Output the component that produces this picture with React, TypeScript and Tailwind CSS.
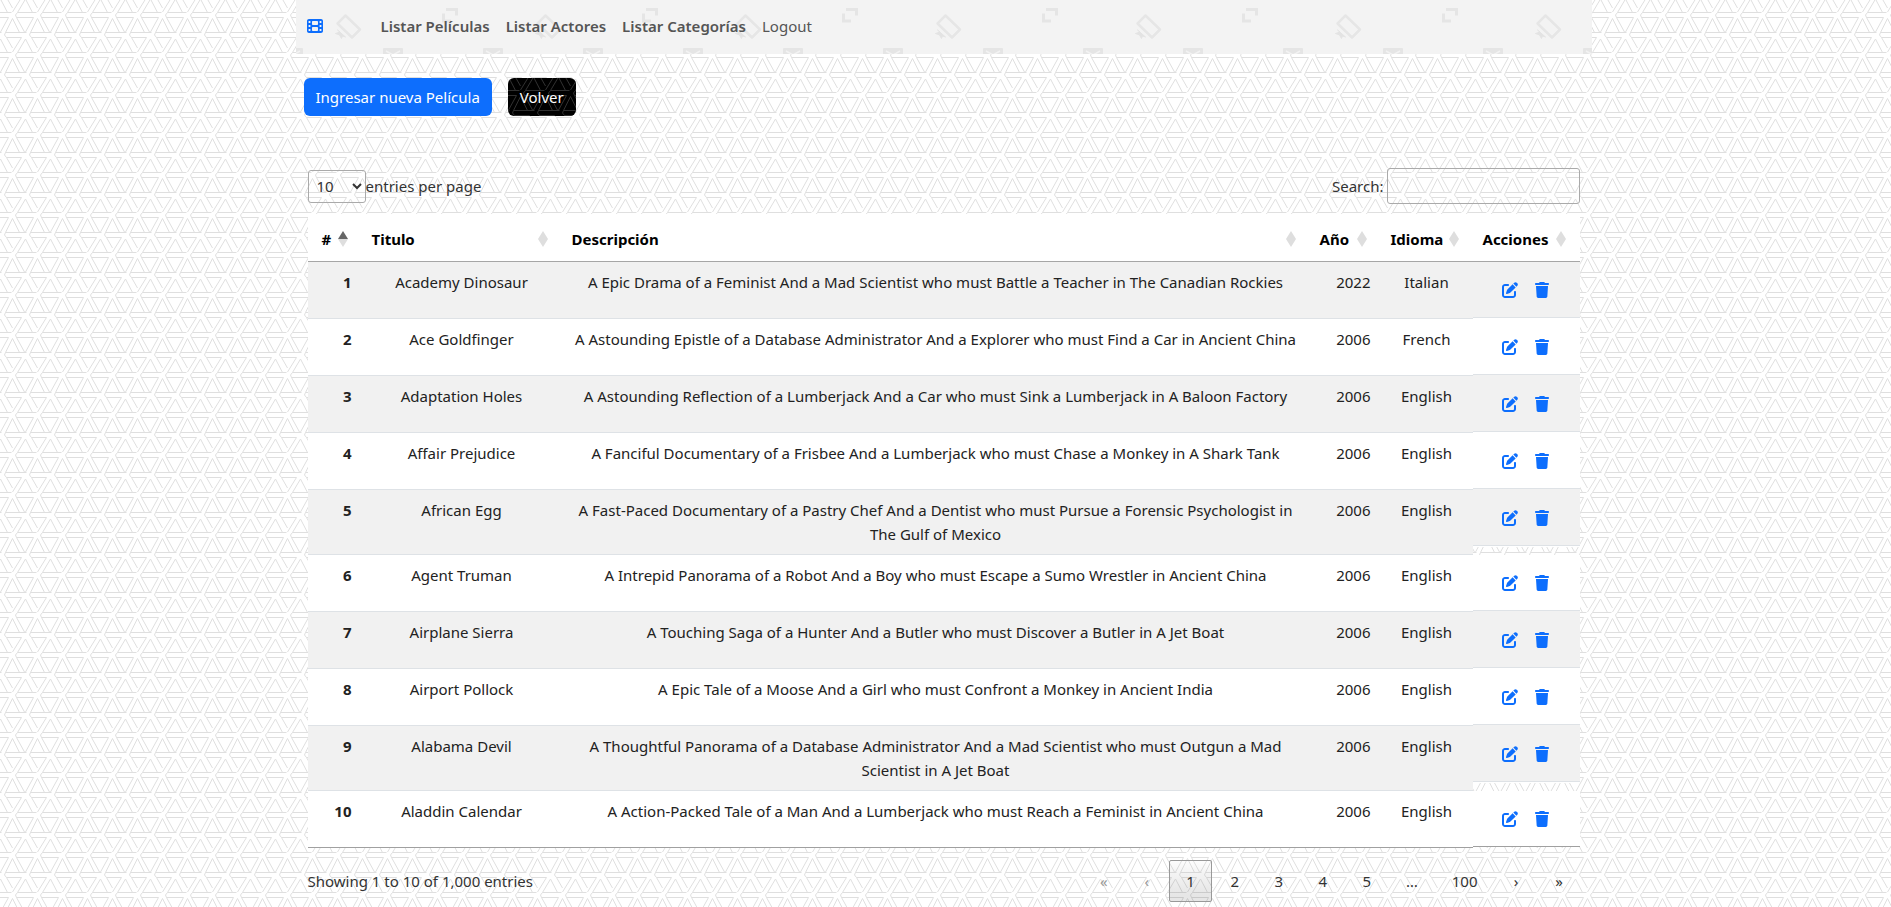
import { useState } from "react";
import { FaFilm, FaPenToSquare, FaTrash } from "react-icons/fa6";

type Film = { id: number; title: string; description: string; year: number; language: string };

const films: Film[] = [
  { id: 1, title: "Academy Dinosaur", description: "A Epic Drama of a Feminist And a Mad Scientist who must Battle a Teacher in The Canadian Rockies", year: 2022, language: "Italian" },
  { id: 2, title: "Ace Goldfinger", description: "A Astounding Epistle of a Database Administrator And a Explorer who must Find a Car in Ancient China", year: 2006, language: "French" },
  { id: 3, title: "Adaptation Holes", description: "A Astounding Reflection of a Lumberjack And a Car who must Sink a Lumberjack in A Baloon Factory", year: 2006, language: "English" },
  { id: 4, title: "Affair Prejudice", description: "A Fanciful Documentary of a Frisbee And a Lumberjack who must Chase a Monkey in A Shark Tank", year: 2006, language: "English" },
  { id: 5, title: "African Egg", description: "A Fast-Paced Documentary of a Pastry Chef And a Dentist who must Pursue a Forensic Psychologist in The Gulf of Mexico", year: 2006, language: "English" },
  { id: 6, title: "Agent Truman", description: "A Intrepid Panorama of a Robot And a Boy who must Escape a Sumo Wrestler in Ancient China", year: 2006, language: "English" },
  { id: 7, title: "Airplane Sierra", description: "A Touching Saga of a Hunter And a Butler who must Discover a Butler in A Jet Boat", year: 2006, language: "English" },
  { id: 8, title: "Airport Pollock", description: "A Epic Tale of a Moose And a Girl who must Confront a Monkey in Ancient India", year: 2006, language: "English" },
  { id: 9, title: "Alabama Devil", description: "A Thoughtful Panorama of a Database Administrator And a Mad Scientist who must Outgun a Mad Scientist in A Jet Boat", year: 2006, language: "English" },
  { id: 10, title: "Aladdin Calendar", description: "A Action-Packed Tale of a Man And a Lumberjack who must Reach a Feminist in Ancient China", year: 2006, language: "English" },
];

const columns = [
  { name: "#", width: "w-[54px]", pad: "pl-[14px]", sorted: true },
  { name: "Titulo", width: "w-[200px]", pad: "pl-[10px]", sorted: false },
  { name: "Descripción", width: "", pad: "pl-[10px]", sorted: false },
  { name: "Año", width: "w-[71px]", pad: "pl-[10px]", sorted: false },
  { name: "Idioma", width: "w-[92px]", pad: "pl-[10px]", sorted: false },
  { name: "Acciones", width: "w-[107px]", pad: "pl-[10px]", sorted: false },
];

/* Triangular weave, one 25 x 40 tile repeated over the whole box. */
function Weave({ id, color }: { id: string; color: string }) {
  return (
    <svg className="pointer-events-none absolute inset-0 h-full w-full" aria-hidden="true">
      <defs>
        <pattern id={id} width="25" height="40" patternUnits="userSpaceOnUse">
          <g fill="none" stroke={color} strokeWidth="1">
            {[-25, 0, 25].map((x) => (
              <g key={x} transform={`translate(${x} 0)`}>
                <path d="M17.5 12.5H36.5M16.5 17.5H33.5L25.5 32M16.5 17.5L24.5 32M17.5 12.5L15.5 15L16.5 17.5" />
                <path d="M12.5 18.5L5.5 32.5M12.5 18.5L19.5 32.5M5.5 32.5H26.5" />
                <path d="M5.5 32.5L4.5 35L6.5 37.5H21.5L12.5 52M6.5 37.5L12.500 48" />
                <path d="M25.5 39L17.5 52.5H32.5Z" />
                <path d="M25.5 -1L17.5 12.5M25.5 -1L32.5 12.5M21.5 -2.5L12.5 12M6.500 -2.5L12.500 8" />
              </g>
            ))}
          </g>
        </pattern>
      </defs>
      <rect width="100%" height="100%" fill={`url(#${id})`} />
    </svg>
  );
}

function NavPattern() {
  return (
    <svg className="pointer-events-none absolute inset-0 h-full w-full" aria-hidden="true">
      <defs>
        <pattern id="nav-icons" width="200" height="100" patternUnits="userSpaceOnUse">
          <path d="M49.500 15.500L41.500 23.500L56 37.500L64 29.500Z" fill="none" stroke="#e6e6e6" strokeWidth="2.500" strokeLinejoin="round" />
          <path d="M41.500 30L49.500 37L46.500 36L45.500 38.500L43.500 35L39.500 33.500L44 32Z" fill="#e3e3e3" stroke="#e3e3e3" />
          <path d="M150 9.500H160.500V15.500M147.500 13.500V21H155" fill="none" stroke="#e5e5e5" strokeWidth="3" />
          {[-13, 87, 187].map((x) => (
            <g key={x} transform={`translate(${x} 48)`}>
              <rect width="20" height="14" rx="1" fill="#e5e5e5" />
              <path d="M3 3L10 7L17 3" fill="none" stroke="#f3f3f3" strokeWidth="1.500" />
            </g>
          ))}
        </pattern>
      </defs>
      <rect width="100%" height="100%" fill="url(#nav-icons)" />
    </svg>
  );
}

function SortMark({ active }: { active: boolean }) {
  return (
    <svg width="10" height="16" viewBox="0 0 10 16" aria-hidden="true">
      <path d="M5 0L10 8H0Z" fill={active ? "#666" : "#dedede"} />
      <path d="M0 8H10L5 16Z" fill="#dedede" />
    </svg>
  );
}

function FilmRow({ film, odd, last }: { film: Film; odd: boolean; last: boolean }) {
  const shade = odd ? "bg-[#f1f1f1]" : "bg-white";
  const line = last ? "border-[#a0a0a0]" : "border-[#dee2e6]";
  const seam = last ? "" : odd ? "shadow-[0_1px_0_#ffffff]" : "shadow-[0_1px_0_#f1f1f1]";
  const cell = `h-[57px] border-b px-[10px] py-2 align-top ${shade} ${line}`;
  return (
    <tr>
      <th scope="row" className={`${cell} text-right font-bold`}>{film.id}</th>
      <td className={cell}>{film.title}</td>
      <td className={cell}>{film.description}</td>
      <td className={`${cell} text-right`}>{film.year}</td>
      <td className={cell}>{film.language}</td>
      <td className="p-0 align-top">
        <div className={`flex h-14 items-center justify-center gap-4 border-b text-[#0d6efd] ${shade} ${line} ${seam}`}>
          <a href="#editar" aria-label={`Editar ${film.title}`}><FaPenToSquare size={16} /></a>
          <a href="#eliminar" aria-label={`Eliminar ${film.title}`}><FaTrash size={16} /></a>
        </div>
      </td>
    </tr>
  );
}

export default function App() {
  const [size, setSize] = useState("10");
  const [query, setQuery] = useState("");
  const arrow = "flex h-[42px] min-w-[41px] items-center justify-center";
  const page = "h-[42px] min-w-[42px] px-4";

  return (
    <div className="relative isolate min-h-screen bg-white pr-1 font-['Noto_Sans',sans-serif] text-[15px] leading-6 text-[#333]">
      <div className="absolute inset-0 -z-10"><Weave id="weave-light" color="#dfdfdf" /></div>
      <div className="mx-auto max-w-[1296px]">
        <nav className="relative isolate flex h-[54px] items-center gap-4 bg-[#f3f3f3] px-[11px] pb-[2px] text-[#555]">
          <div className="absolute inset-0 -z-10"><NavPattern /></div>
          <a href="#inicio" aria-label="Inicio" className="mr-[42px] text-[#0d6efd]"><FaFilm size={16} /></a>
          <a href="#peliculas" className="font-semibold">Listar Películas</a>
          <a href="#actores" className="font-semibold">Listar Actores</a>
          <a href="#categorias" className="font-semibold">Listar Categorías</a>
          <a href="#logout">Logout</a>
        </nav>

        <div className="flex gap-4 px-2 pt-6">
          <button className="h-[38px] rounded-md bg-[#0d6efd] px-3 text-white">Ingresar nueva Película</button>
          <button className="relative isolate h-[38px] overflow-hidden rounded-md bg-black px-3 text-white">
            <span className="absolute inset-0 -z-10"><Weave id="weave-dark" color="#303030" /></span>
            Volver
          </button>
        </div>

        <main className="px-3 pt-[52px]">
          <div className="flex items-center justify-between">
            <div className="flex items-center">
              <select id="page-size" value={size} onChange={(e) => setSize(e.target.value)} className="h-[33px] w-[58px] rounded-[3px] border border-[#aaa] bg-transparent pl-1">
                <option>10</option>
                <option>25</option>
                <option>50</option>
                <option>100</option>
              </select>
              <label htmlFor="page-size">entries per page</label>
            </div>
            <div className="flex items-center gap-[3px]">
              <label htmlFor="search">Search:</label>
              <input id="search" type="search" value={query} onChange={(e) => setQuery(e.target.value)} className="h-9 w-[193px] rounded-[3px] border border-[#aaa] bg-transparent px-[5px]" />
            </div>
          </div>

          <table className="mt-[10px] w-full table-fixed border-separate border-spacing-0 text-center text-[#222]">
            <thead>
              <tr>
                {columns.map((c) => (
                  <th key={c.name} scope="col" className={`h-12 border-b border-[#a6a6a6] bg-white pt-[2px] pr-[14px] pb-0 text-left font-bold text-black ${c.width} ${c.pad}`}>
                    <span className="flex items-center justify-between">{c.name}<SortMark active={c.sorted} /></span>
                  </th>
                ))}
              </tr>
            </thead>
            <tbody>
              {films.map((f, i) => <FilmRow key={f.id} film={f} odd={i % 2 === 0} last={i === films.length - 1} />)}
            </tbody>
          </table>

          <div className="flex items-center justify-between pt-3">
            <p>Showing 1 to 10 of 1,000 entries</p>
            <div className="flex gap-[2px]">
              <button className={`${arrow} text-[#999]`} disabled>«</button>
              <button className={`${arrow} text-[#999]`} disabled>‹</button>
              <button className={`${page} rounded-[2px] border border-[#999] bg-linear-to-b from-[#e6e6e6]/10 to-black/10`}>1</button>
              <button className={page}>2</button>
              <button className={page}>3</button>
              <button className={page}>4</button>
              <button className={page}>5</button>
              <span className="px-4 leading-[42px]">…</span>
              <button className={page}>100</button>
              <button className={arrow}>›</button>
              <button className={arrow}>»</button>
            </div>
          </div>
        </main>
      </div>
    </div>
  );
}
